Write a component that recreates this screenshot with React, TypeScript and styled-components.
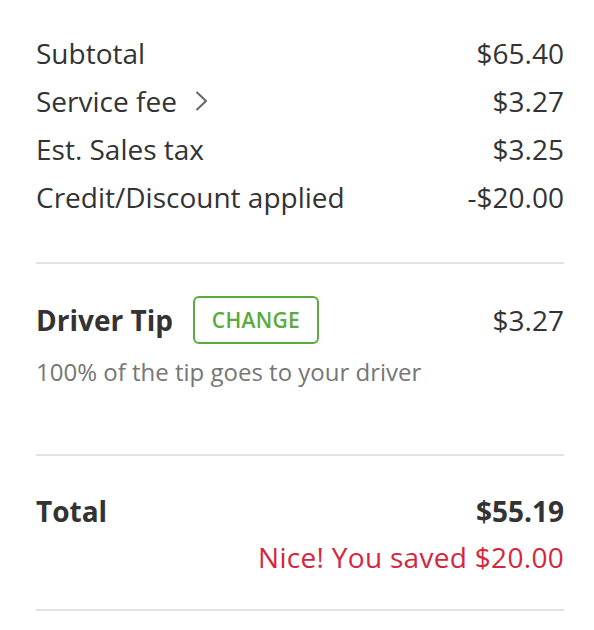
import React from 'react';
import styled, { createGlobalStyle } from 'styled-components';

const colors = {
    text: '#333333',
    muted: '#767676',
    green: '#5aab3c',
    red: '#d6263e',
    line: '#e2e2e2',
};

interface LineItem {
    label: string;
    amount: string;
    hasInfo?: boolean;
}

const items: LineItem[] = [
    { label: 'Subtotal', amount: '$65.40' },
    { label: 'Service fee', amount: '$3.27', hasInfo: true },
    { label: 'Est. Sales tax', amount: '$3.25' },
    { label: 'Credit/Discount applied', amount: '-$20.00' },
];

const Chevron: React.FC = () => (
    <ChevronSvg width="12" height="20" viewBox="0 0 12 20" fill="none">
        <path d="M1.5 1l9.5 9-9.5 9" stroke="#666" strokeWidth="2" />
    </ChevronSvg>
);

const App: React.FC = () => (
    <>
        <GlobalStyle />
        <Summary>
            <Section>
                {items.map((item) => (
                    <Row key={item.label}>
                        <Label>
                            {item.label}
                            {item.hasInfo && <Chevron />}
                        </Label>
                        <Amount>{item.amount}</Amount>
                    </Row>
                ))}
            </Section>
            <TipSection>
                <TipRow>
                    <TipLabel>
                        <Strong>Driver Tip</Strong>
                        <ChangeButton type="button">CHANGE</ChangeButton>
                    </TipLabel>
                    <Amount>$3.27</Amount>
                </TipRow>
                <Note>100% of the tip goes to your driver</Note>
            </TipSection>
            <TotalSection>
                <Row>
                    <Strong>Total</Strong>
                    <Strong>$55.19</Strong>
                </Row>
                <Savings>Nice! You saved $20.00</Savings>
            </TotalSection>
        </Summary>
    </>
);

export default App;

const GlobalStyle = createGlobalStyle`
    body {
        margin: 0;
        background: #fff;
        font-family: "Open Sans", "Noto Sans", sans-serif;
        color: ${colors.text};
    }
`;

const Summary = styled.div`
    padding: 29px 30px 0 36px;
`;

const Section = styled.div`
    padding-bottom: 41px;
    border-bottom: 2px solid ${colors.line};
`;

const Row = styled.div`
    display: flex;
    align-items: center;
    justify-content: space-between;
    font-size: 28px;
    line-height: 48px;
`;

const Label = styled.span`
    display: flex;
    align-items: center;
`;

const ChevronSvg = styled.svg`
    margin-left: 18px;
`;

const Amount = styled.span``;

const TipSection = styled.div`
    padding: 32px 0 67px;
    border-bottom: 2px solid ${colors.line};
`;

const TipRow = styled(Row)`
    height: 48px;
`;

const TipLabel = styled.div`
    display: flex;
    align-items: center;
    gap: 20px;
`;

const Strong = styled.span`
    font-weight: 700;
`;

const ChangeButton = styled.button`
    font-family: inherit;
    font-size: 21px;
    font-weight: 600;
    letter-spacing: 0.3px;
    color: ${colors.green};
    background: #fff;
    border: 2px solid ${colors.green};
    border-radius: 6px;
    height: 48px;
    width: 126px;
    padding: 0;
    cursor: pointer;
`;

const Note = styled.div`
    margin-top: 13px;
    font-size: 24px;
    line-height: 30px;
    color: ${colors.muted};
`;

const TotalSection = styled.div`
    padding: 31px 0 30px;
    border-bottom: 2px solid ${colors.line};
`;

const Savings = styled.div`
    text-align: right;
    font-size: 28px;
    letter-spacing: 0.3px;
    line-height: 44px;
    color: ${colors.red};
`;
